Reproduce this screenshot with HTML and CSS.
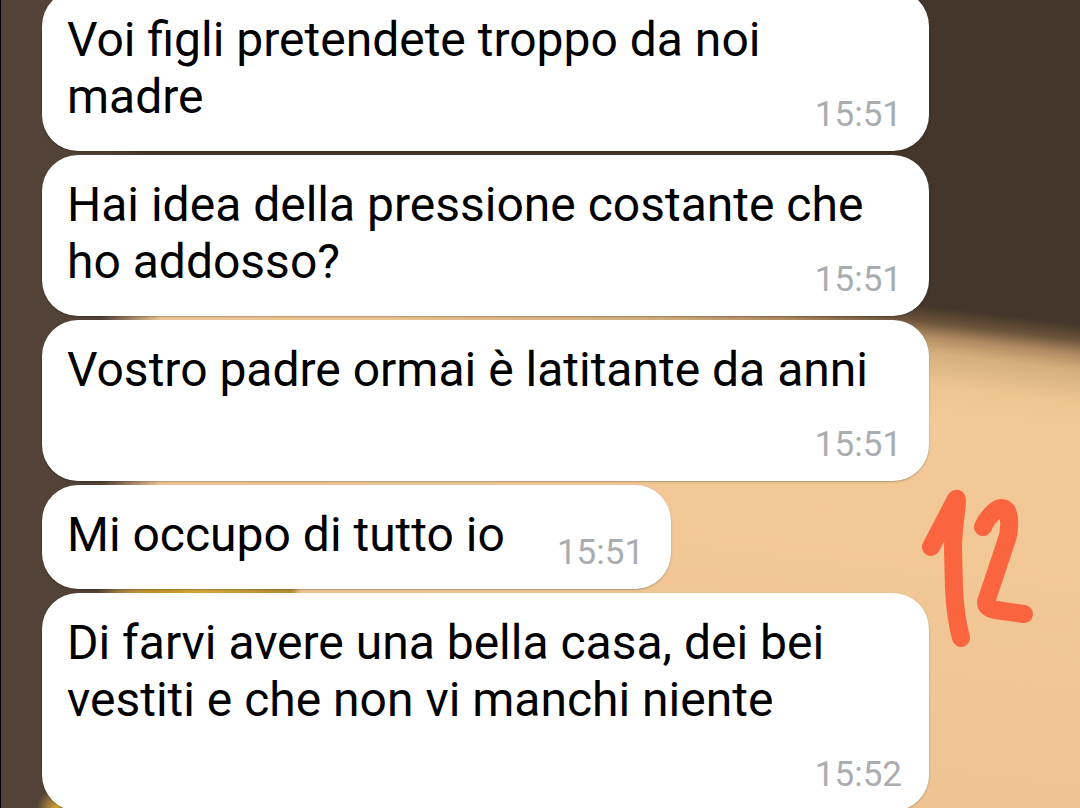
FILE: index.html
```html
<!DOCTYPE html>
<html lang="it">
<head>
    <meta charset="UTF-8">
    <meta name="viewport" content="width=device-width, initial-scale=1.0">
    <title>Chat</title>
    <link rel="stylesheet" href="styles.css">
</head>
<body>
    <main class="chat">
        <div class="messages">
            <p class="bubble">Voi figli pretendete troppo da noi madre<time class="time">15:51</time></p>
            <p class="bubble">Hai idea della pressione costante che ho addosso?<time class="time">15:51</time></p>
            <p class="bubble">Vostro padre ormai è latitante da anni<time class="time">15:51</time></p>
            <p class="bubble">Mi occupo di tutto io<time class="time">15:51</time></p>
            <p class="bubble">Di farvi avere una bella casa, dei bei vestiti e che non vi manchi niente<time class="time">15:52</time></p>
        </div>

        <!-- marker doodle -->
        <svg class="doodle" viewBox="0 0 120 170" role="img" aria-label="12">
            <path d="M11 67 L36 19 Q38 17 36 32 Q33 55 33 70 L34 108 Q35 135 41 158"/>
            <path d="M63 47 Q66 39 75 31 Q82 25 87 31 Q90 38 89 47 Q89 54 86 62 L67 119 Q63 128 76 130 L104 134"/>
        </svg>
    </main>
</body>
</html>
```

FILE: styles.css
```css
* { box-sizing: border-box; }

body { margin: 0; font-family: Roboto, "Noto Sans", sans-serif; background-color: #f2c796; }

.chat {
    position: relative;
    height: 100vh;
    overflow: hidden;
    border-left: 1px solid #000;
    /* blurred wallpaper: yellow details, left wall, dark top */
    background-image:
        radial-gradient(circle at 56px 808px, #d9a93a 0, rgba(217, 169, 58, 0) 20px),
        linear-gradient(to right, rgba(190, 145, 40, 0) 95px, #be9128 150px, #d6aa3c 200px, #b58c35 290px, rgba(190, 145, 40, 0) 300px),
        linear-gradient(to right, #524237 100px, rgba(82, 66, 55, 0) 160px),
        linear-gradient(187deg, #44362a 322px, #6b543b 338px, #b08a62 352px, #d4af7c 368px, #eec48f 400px, #f3c997 440px, #eec391 900px);
    background-size: 100% 100%, 100% 20px, 100% 100%, 100% 100%;
    background-position: 0 0, 0 582px, 0 0, 0 0;
    background-repeat: no-repeat;
}

.messages {
    display: flex;
    flex-direction: column;
    align-items: flex-start;
    gap: 4px;
    margin: -10px 151px 0 41px;
}

.bubble {
    display: flow-root;
    flex-shrink: 0;
    max-width: 100%;
    margin: 0;
    padding: 21px 27px 16px 25px;
    border-radius: 36px;
    background-color: #fff;
    box-shadow: 0 1px 2px rgba(0, 0, 0, 0.25);
    color: #000;
    font-size: 48px;
    line-height: 57px;
}

/* drops under the text when the last line has no room left */
.time {
    float: right;
    margin: 26px 0 0 52px;
    color: #a9adb0;
    font-size: 35px;
    line-height: 41px;
}

.doodle {
    position: absolute;
    top: 480px;
    right: 40px;
    width: 120px;
    height: 170px;
    fill: none;
    stroke: #fa6540;
    stroke-width: 18;
    stroke-linecap: round;
    stroke-linejoin: round;
}
```
